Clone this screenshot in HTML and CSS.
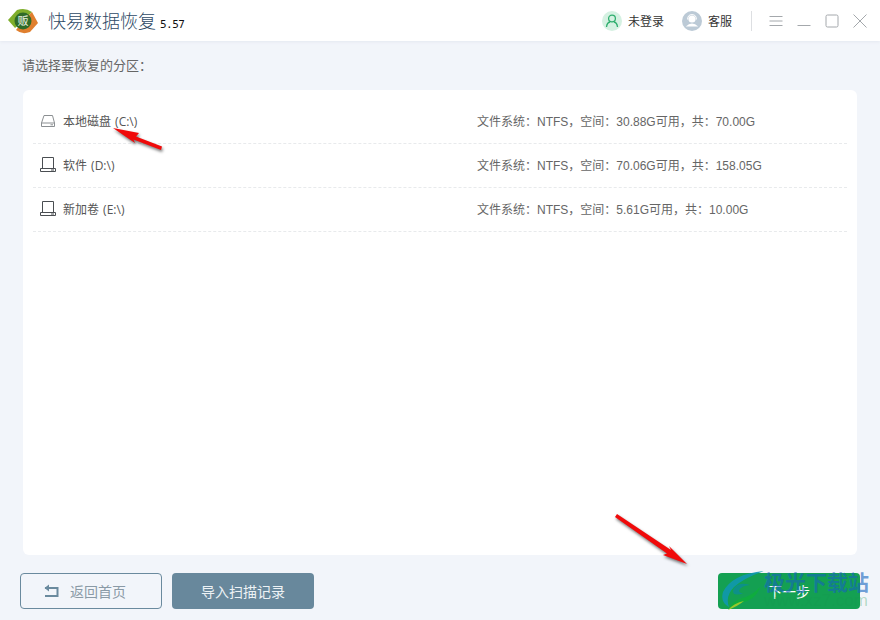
FILE: index.html
```html
<!DOCTYPE html>
<html lang="en">
<head>
    <meta charset="UTF-8">
    <title>快易数据恢复</title>
    <link rel="stylesheet" href="styles.css">
</head>
<body>
    <div class="app">
        <header class="topbar">
            <div class="brand">
                <svg class="logo" viewBox="0 0 30 30" width="30" height="30">
                    <path d="M0 14 L9 4 Q17 1 24 6 L15 15 L7 22 Z" fill="#7fae2c"/>
                    <path d="M30 17 L22 26 Q14 29 8 24 L15 15 L24 6 Z" fill="#e07f2e"/>
                    <circle cx="15" cy="15" r="8.5" fill="#2f6b28"/>
                    <text x="15" y="19" class="logo-text">贩</text>
                </svg>
                <span class="app-name">快易数据恢复</span>
                <span class="version">5.57</span>
            </div>
            <div class="tools">
                <div class="tool tool-login">
                    <span class="avatar avatar-green">
                        <svg viewBox="0 0 20 20" width="20" height="20" fill="none" stroke="#2fae6e" stroke-width="1.3">
                            <circle cx="10" cy="7.5" r="3.4"/>
                            <path d="M4.5 16 Q5 11.5 8 11 M15.5 16 Q15 11.5 12 11"/>
                        </svg>
                    </span>
                    <span>未登录</span>
                </div>
                <div class="tool tool-service">
                    <span class="avatar avatar-grey">
                        <svg viewBox="0 0 20 20" width="20" height="20">
                            <circle cx="10" cy="8" r="3.6" fill="#fff"/>
                            <path d="M3.8 15.5 Q10 9.5 16.2 15.5 Z" fill="#fff"/>
                            <path d="M5.6 8.5 Q5.6 3.6 10 3.6 Q14.4 3.6 14.4 8.5" fill="none" stroke="#fff" stroke-width="1"/>
                        </svg>
                    </span>
                    <span>客服</span>
                </div>
                <span class="divider"></span>
                <svg class="win-btn" viewBox="0 0 14 14" width="14" height="14" fill="none" stroke="#a4a8ac" stroke-width="1">
                    <path d="M0.5 2.5H13.5M0.5 7H13.5M0.5 11.5H13.5"/>
                </svg>
                <svg class="win-btn" viewBox="0 0 14 14" width="14" height="14" fill="none" stroke="#a4a8ac" stroke-width="1">
                    <path d="M0.5 11.5H13.5"/>
                </svg>
                <svg class="win-btn" viewBox="0 0 14 14" width="14" height="14" fill="none" stroke="#a4a8ac" stroke-width="1">
                    <rect x="1" y="1" width="12" height="12" rx="1.5"/>
                </svg>
                <svg class="win-btn" viewBox="0 0 14 14" width="14" height="14" fill="none" stroke="#a4a8ac" stroke-width="1">
                    <path d="M0.5 0.5L13.5 13.5M13.5 0.5L0.5 13.5"/>
                </svg>
            </div>
        </header>

        <main class="content">
            <p class="prompt">请选择要恢复的分区：</p>

            <div class="card">
                <div class="row">
                    <div class="drive">
                        <svg class="drive-icon" viewBox="0 0 16 16" width="16" height="16" fill="none" stroke="#8b8f92" stroke-width="1">
                            <path d="M4 2.5H12.5L14.5 10V13.5H1.5V10Z"/>
                            <path d="M1.5 10H14.5M10.5 11.8H13"/>
                        </svg>
                        <span>本地磁盘 (C:\)</span>
                    </div>
                    <div class="info">文件系统：NTFS，空间：30.88G可用，共：70.00G</div>
                </div>
                <div class="row">
                    <div class="drive">
                        <svg class="drive-icon" viewBox="0 0 16 16" width="16" height="16" fill="none" stroke="#4a4e52" stroke-width="1">
                            <path d="M2.5 0.5H13.5V11.5H2.5Z"/>
                            <path d="M0.5 11.5H15.5V14.5H0.5Z"/>
                            <path d="M11 13H14"/>
                        </svg>
                        <span>软件 (D:\)</span>
                    </div>
                    <div class="info">文件系统：NTFS，空间：70.06G可用，共：158.05G</div>
                </div>
                <div class="row">
                    <div class="drive">
                        <svg class="drive-icon" viewBox="0 0 16 16" width="16" height="16" fill="none" stroke="#4a4e52" stroke-width="1">
                            <path d="M2.5 0.5H13.5V11.5H2.5Z"/>
                            <path d="M0.5 11.5H15.5V14.5H0.5Z"/>
                            <path d="M11 13H14"/>
                        </svg>
                        <span>新加卷 (E:\)</span>
                    </div>
                    <div class="info">文件系统：NTFS，空间：5.61G可用，共：10.00G</div>
                </div>
            </div>

            <footer class="actions">
                <div class="actions-left">
                    <button class="btn btn-outline">
                        <svg viewBox="0 0 16 14" width="16" height="14" fill="none" stroke="#6a8a9e" stroke-width="2">
                            <path d="M2 4H14.5V12H2"/>
                            <path d="M6 0.5V7.5L1.5 4Z" fill="#6a8a9e" stroke="none"/>
                        </svg>
                        <span>返回首页</span>
                    </button>
                    <button class="btn btn-slate">导入扫描记录</button>
                </div>
                <button class="btn btn-green">下一步</button>
            </footer>
        </main>

        <!-- red arrows drawn on top of the screenshot -->
        <svg class="arrow arrow-one" viewBox="0 0 50 23" width="50" height="23">
            <path d="M0 0 L26 5 L23 8.5 L49 18.5 L48 22 L20.5 11.5 L22 15 Z" fill="#f00a0a"/>
        </svg>
        <svg class="arrow arrow-two" viewBox="0 0 73 51" width="73" height="51">
            <path d="M2 0 L56 36 L54 32 L72 50 L48 41 L52 39.5 L0 3 Z" fill="#f00a0a"/>
        </svg>

        <div class="watermark">
            <svg class="wm-logo" viewBox="0 0 44 40" width="44" height="40">
                <path d="M44 1 Q12 4 3 22 Q0 32 9 37 Q5 26 14 17 Q24 8 44 1Z" fill="#1098b0"/>
                <path d="M30 15 Q16 11 13 21 Q13 27 24 23 Q20 24 19 21 Q20 16 30 15Z" fill="#0d8f8f"/>
                <path d="M40 17 Q36 30 20 33 Q12 35 8 40 Q12 31 22 28 Q32 26 40 17Z" fill="#0fae3c"/>
                <path d="M8 40 Q14 33 24 31 Q18 36 8 40Z" fill="#a8cc2a"/>
            </svg>
            <div class="wm-text">
                <span class="wm-title">极光下载站</span>
                <span class="wm-url">www.xz7.com</span>
            </div>
        </div>
    </div>
</body>
</html>
```

FILE: styles.css
```css
* {
    box-sizing: border-box;
}

html, body {
    margin: 0;
    padding: 0;
}

body {
    font-family: "Liberation Sans", "Noto Sans CJK SC", sans-serif;
    font-size: 12px;
    color: #555;
    background-color: #F2F5FA;
}

.app {
    position: relative;
    width: 880px;
    height: 620px;
    overflow: hidden;
    display: flex;
    flex-direction: column;
    background-color: #F2F5FA;
}

.topbar {
    height: 41px;
    flex-shrink: 0;
    padding: 0 20px 0 8px;
    display: flex;
    justify-content: space-between;
    align-items: center;
    background-color: white;
    box-shadow: 0 1px 3px #E4E8F0;
}

.brand {
    display: flex;
    align-items: center;
}

.logo-text {
    font-family: "Noto Sans CJK SC", sans-serif;
    font-size: 11px;
    fill: #e8f0e0;
    text-anchor: middle;
}

.app-name {
    margin: 0 0 2px 10px;
    font-family: "Noto Sans CJK SC", sans-serif;
    font-weight: 300;
    font-size: 18px;
    color: #2E4A66;
}

.version {
    margin: 7px 0 0 4px;
    font-family: "DejaVu Sans Mono", monospace;
    font-size: 11px;
    letter-spacing: -0.5px;
    color: #111;
}

.tools {
    display: flex;
    align-items: center;
}

.tool {
    display: flex;
    align-items: center;
    gap: 6px;
    color: #333;
}

.tool-service {
    margin-left: 18px;
}

.avatar {
    width: 20px;
    height: 20px;
    border-radius: 50%;
    display: block;
}

.avatar svg {
    display: block;
}

.avatar-green {
    background-color: #D5F1E2;
}

.avatar-grey {
    background-color: #BCCAD6;
}

.divider {
    width: 1px;
    height: 20px;
    margin: 0 17px 0 19px;
    background-color: #DDDFE2;
}

.win-btn {
    display: block;
    margin-right: 14px;
}

.win-btn:last-child {
    margin-right: -7px;
}

.content {
    flex: 1;
    padding: 0 20px 11px 20px;
    display: flex;
    flex-direction: column;
}

.prompt {
    margin: 16px 0 15px 2px;
    line-height: 18px;
    font-size: 13px;
    color: #666;
}

.card {
    flex: 1;
    margin: 0 3px;
    padding: 10px 10px;
    background-color: white;
    border-radius: 6px;
}

.row {
    height: 44px;
    padding-left: 7px;
    padding-bottom: 2px;
    display: flex;
    align-items: center;
    border-bottom: 1px dashed #E8EAEC;
}

.drive {
    width: 437px;
    display: flex;
    align-items: center;
    gap: 7px;
    font-family: "Open Sans", "Noto Sans CJK SC", sans-serif;
    word-spacing: 1px;
    color: #555;
}

.drive-icon {
    display: block;
    flex-shrink: 0;
}

.info {
    color: #666;
}

.actions {
    margin-top: 18px;
    display: flex;
    justify-content: space-between;
}

.actions-left {
    display: flex;
    gap: 10px;
}

.btn {
    width: 142px;
    height: 36px;
    border-radius: 4px;
    border: none;
    font-family: inherit;
    font-size: 14px;
    display: flex;
    align-items: center;
    justify-content: center;
}

.btn-outline {
    gap: 11px;
    padding-right: 19px;
    color: #8a9aa6;
    background-color: transparent;
    border: 1px solid #6A8A9E;
}

.btn-slate {
    color: #EDF2F5;
    background-color: #68889C;
}

.btn-green {
    color: white;
    background-color: #14A052;
}

.arrow {
    position: absolute;
    display: block;
    overflow: visible;
    filter: drop-shadow(1px 2px 1.5px rgba(0, 0, 0, 0.55));
}

.arrow-one {
    left: 113px;
    top: 128px;
}

.arrow-two {
    left: 615px;
    top: 514px;
}

.watermark {
    position: absolute;
    left: 718px;
    top: 570px;
    display: flex;
    align-items: flex-start;
}

.wm-logo {
    display: block;
    flex-shrink: 0;
    margin-left: 2px;
    opacity: 0.9;
}

.wm-text {
    display: flex;
    flex-direction: column;
}

.wm-title {
    font-family: "Noto Sans CJK SC", sans-serif;
    font-weight: 700;
    font-size: 21px;
    line-height: 22px;
    color: rgba(20, 100, 190, 0.62);
    white-space: nowrap;
}

.wm-url {
    font-size: 17px;
    line-height: 18px;
    color: rgba(20, 150, 80, 0.3);
    white-space: nowrap;
}
```
